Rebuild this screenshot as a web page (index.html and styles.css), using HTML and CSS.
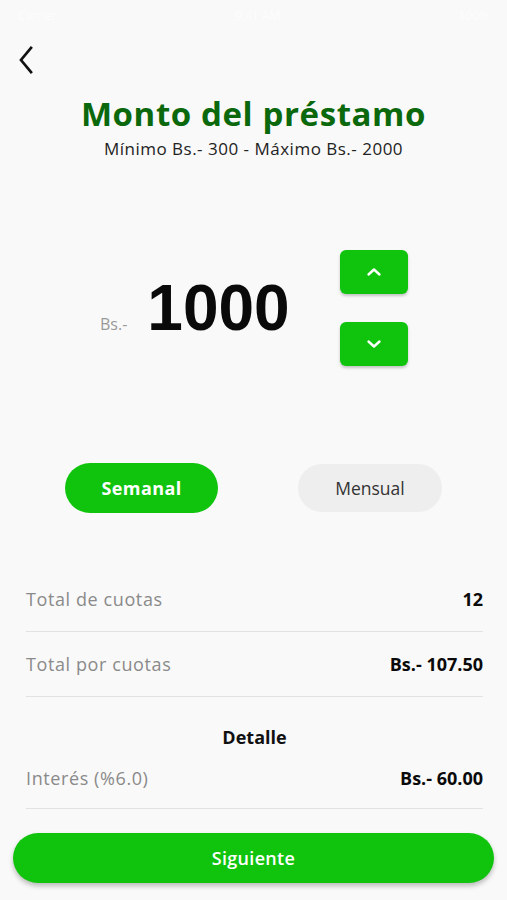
FILE: index.html
```html
<!DOCTYPE html>
<html lang="es">
<head>
<meta charset="utf-8">
<title>Monto del préstamo</title>
<link rel="stylesheet" href="styles.css">
</head>
<body>
<div class="screen">
  <div class="status">
    <span>Carrier</span>
    <span>9:41 AM</span>
    <span>100%</span>
  </div>
  <div class="topbar">
    <button class="back" aria-label="Atrás">
      <svg width="16" height="28" viewBox="0 0 16 28"><path d="M13 2 L3 14 L13 26" fill="none" stroke="#111" stroke-width="2.7" stroke-linecap="square" stroke-linejoin="miter"/></svg>
    </button>
  </div>
  <h1 class="title">Monto del préstamo</h1>
  <p class="subtitle">Mínimo Bs.- 300 - Máximo Bs.- 2000</p>

  <div class="amount">
    <div class="value">
      <span class="cur">Bs.-</span>
      <span class="num">1000</span>
    </div>
    <div class="steppers">
      <button class="step" aria-label="Aumentar">
        <svg width="16" height="10" viewBox="0 0 16 10"><path d="M2.5 7.5 L8 2.5 L13.5 7.5" fill="none" stroke="#fff" stroke-width="2.4" stroke-linecap="round" stroke-linejoin="round"/></svg>
      </button>
      <button class="step" aria-label="Disminuir">
        <svg width="16" height="10" viewBox="0 0 16 10"><path d="M2.5 2.5 L8 7.5 L13.5 2.5" fill="none" stroke="#fff" stroke-width="2.4" stroke-linecap="round" stroke-linejoin="round"/></svg>
      </button>
    </div>
  </div>

  <div class="toggle">
    <button class="pill active">Semanal</button>
    <button class="pill">Mensual</button>
  </div>

  <div class="rows">
    <div class="row"><span class="label">Total de cuotas</span><span class="val">12</span></div>
    <div class="row"><span class="label">Total por cuotas</span><span class="val">Bs.- 107.50</span></div>
    <div class="detail">Detalle</div>
    <div class="row small"><span class="label">Interés (%6.0)</span><span class="val">Bs.- 60.00</span></div>
  </div>

  <button class="next">Siguiente</button>
</div>
</body>
</html>
```
FILE: styles.css
```css
* { box-sizing: border-box; }
html, body {
  margin: 0;
  padding: 0;
  background: #f9f9f9;
}
body {
  font-family: "Open Sans", "Noto Sans", "Liberation Sans", sans-serif;
  color: #111;
}
button {
  font-family: inherit;
  border: none;
  cursor: pointer;
}
.screen {
  width: 507px;
  height: 900px;
  display: flex;
  flex-direction: column;
  overflow: hidden;
}
.status {
  height: 30px;
  display: flex;
  justify-content: space-between;
  align-items: center;
  padding: 0 18px;
  font-size: 12px;
  color: #fdfdfd;
}
.topbar {
  height: 56px;
  padding: 15px 0 0 18px;
}
.back {
  background: none;
  padding: 0;
  width: 20px;
  height: 30px;
  display: flex;
  align-items: center;
}
.title {
  margin: 8px 0 0;
  text-align: center;
  font-size: 33px;
  font-weight: 700;
  color: #0b680c;
  line-height: 40px;
  letter-spacing: 0.6px;
}
.subtitle {
  margin: 4px 0 0;
  text-align: center;
  font-size: 17px;
  font-weight: 500;
  color: #222;
  line-height: 22px;
  letter-spacing: 0.5px;
}
.amount {
  margin-top: 90px;
  display: flex;
  align-items: center;
  padding: 0 99px 0 100px;
}
.value {
  display: flex;
  align-items: baseline;
  gap: 20px;
}
.cur {
  font-size: 16px;
  color: #999;
  font-weight: 500;
}
.num {
  font-family: "Liberation Sans", "Open Sans", sans-serif;
  font-size: 64px;
  font-weight: 700;
  color: #0a0a0a;
}
.steppers {
  margin-left: auto;
  display: flex;
  flex-direction: column;
  gap: 28px;
}
.step {
  width: 68px;
  height: 44px;
  border-radius: 6px;
  background: #10c40e;
  box-shadow: 0 2px 3px rgba(0,0,0,0.22);
  display: flex;
  align-items: center;
  justify-content: center;
  padding: 0;
}
.toggle {
  margin-top: 97px;
  display: flex;
  padding-left: 65px;
  gap: 80px;
  align-items: center;
}
.pill {
  height: 50px;
  border-radius: 25px;
  font-size: 18px;
}
.pill.active {
  width: 153px;
  background: #10c40e;
  color: #fff;
  font-weight: 700;
  letter-spacing: 0.4px;
}
.pill:not(.active) {
  width: 144px;
  height: 48px;
  background: #eeeeee;
  color: #333;
  font-weight: 500;
  font-size: 17.5px;
}
.rows {
  margin-top: 54px;
  padding: 0 24px 0 26px;
}
.row {
  height: 65px;
  display: flex;
  justify-content: space-between;
  align-items: center;
  border-bottom: 1.5px solid #e2e2e2;
  font-size: 18px;
}
.label {
  color: #8a8a8a;
  letter-spacing: 0.6px;
}
.val {
  font-weight: 700;
  color: #0a0a0a;
}
.detail {
  text-align: center;
  font-size: 18px;
  font-weight: 700;
  padding-top: 29px;
  line-height: 22px;
}
.row.small {
  height: 61px;
}
.next {
  margin: 24px 13px 0;
  height: 50px;
  border-radius: 25px;
  background: #10c40e;
  color: #fff;
  font-size: 18px;
  font-weight: 600;
  letter-spacing: 0.3px;
  box-shadow: 0 3px 5px rgba(0,0,0,0.25);
}
```
